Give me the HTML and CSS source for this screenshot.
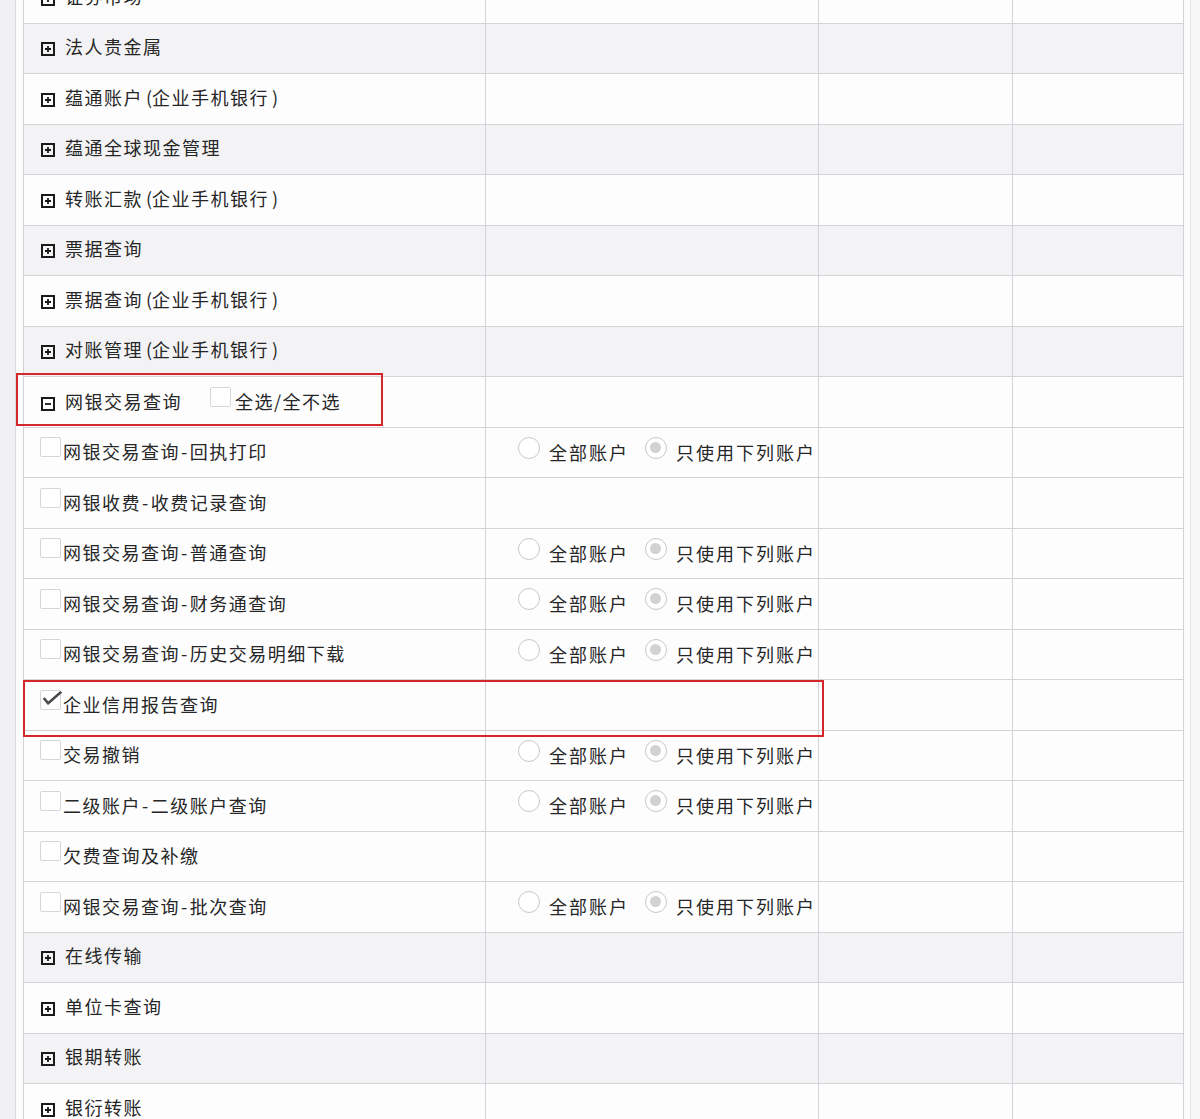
FILE: index.html
```html
<!DOCTYPE html>
<html lang="zh-CN">
<head>
    <meta charset="UTF-8">
    <title>权限设置</title>
    <link rel="stylesheet" href="styles.css">
</head>
<body>

<div class="page">
    <div class="rail"></div>
    <div class="main">
        <table class="perm">
            <colgroup>
                <col class="c-name"><col class="c-acct"><col class="c-x"><col class="c-y">
            </colgroup>
            <tr class="grp"><td><svg class="tog" viewBox="0 0 14 14"><rect x="1" y="1" width="12" height="12"/><path d="M4 7h6M7 4v6"/></svg>证券市场</td><td></td><td></td><td></td></tr>
            <tr class="grp alt"><td><svg class="tog" viewBox="0 0 14 14"><rect x="1" y="1" width="12" height="12"/><path d="M4 7h6M7 4v6"/></svg>法人贵金属</td><td></td><td></td><td></td></tr>
            <tr class="grp"><td><svg class="tog" viewBox="0 0 14 14"><rect x="1" y="1" width="12" height="12"/><path d="M4 7h6M7 4v6"/></svg>蕴通账户<span class="pa">(</span>企业手机银行<span class="pa">)</span></td><td></td><td></td><td></td></tr>
            <tr class="grp alt"><td><svg class="tog" viewBox="0 0 14 14"><rect x="1" y="1" width="12" height="12"/><path d="M4 7h6M7 4v6"/></svg>蕴通全球现金管理</td><td></td><td></td><td></td></tr>
            <tr class="grp"><td><svg class="tog" viewBox="0 0 14 14"><rect x="1" y="1" width="12" height="12"/><path d="M4 7h6M7 4v6"/></svg>转账汇款<span class="pa">(</span>企业手机银行<span class="pa">)</span></td><td></td><td></td><td></td></tr>
            <tr class="grp alt"><td><svg class="tog" viewBox="0 0 14 14"><rect x="1" y="1" width="12" height="12"/><path d="M4 7h6M7 4v6"/></svg>票据查询</td><td></td><td></td><td></td></tr>
            <tr class="grp"><td><svg class="tog" viewBox="0 0 14 14"><rect x="1" y="1" width="12" height="12"/><path d="M4 7h6M7 4v6"/></svg>票据查询<span class="pa">(</span>企业手机银行<span class="pa">)</span></td><td></td><td></td><td></td></tr>
            <tr class="grp alt"><td><svg class="tog" viewBox="0 0 14 14"><rect x="1" y="1" width="12" height="12"/><path d="M4 7h6M7 4v6"/></svg>对账管理<span class="pa">(</span>企业手机银行<span class="pa">)</span></td><td></td><td></td><td></td></tr>
            <tr class="grp"><td><svg class="tog" viewBox="0 0 14 14"><rect x="1" y="1" width="12" height="12"/><path d="M4 7h6"/></svg>网银交易查询<span class="all"><span class="cb"></span>全选/全不选</span></td><td></td><td></td><td></td></tr>

            <tr class="item"><td><span class="cb"></span>网银交易查询<span class="dash">-</span>回执打印</td><td><span class="rd"></span>全部账户<span class="rd on"></span>只使用下列账户</td><td></td><td></td></tr>
            <tr class="item"><td><span class="cb"></span>网银收费<span class="dash">-</span>收费记录查询</td><td></td><td></td><td></td></tr>
            <tr class="item"><td><span class="cb"></span>网银交易查询<span class="dash">-</span>普通查询</td><td><span class="rd"></span>全部账户<span class="rd on"></span>只使用下列账户</td><td></td><td></td></tr>
            <tr class="item"><td><span class="cb"></span>网银交易查询<span class="dash">-</span>财务通查询</td><td><span class="rd"></span>全部账户<span class="rd on"></span>只使用下列账户</td><td></td><td></td></tr>
            <tr class="item"><td><span class="cb"></span>网银交易查询<span class="dash">-</span>历史交易明细下载</td><td><span class="rd"></span>全部账户<span class="rd on"></span>只使用下列账户</td><td></td><td></td></tr>
            <tr class="item"><td><span class="cb checked"><svg viewBox="0 0 24 16"><path d="M2 8l5 6L22 1"/></svg></span>企业信用报告查询</td><td></td><td></td><td></td></tr>
            <tr class="item"><td><span class="cb"></span>交易撤销</td><td><span class="rd"></span>全部账户<span class="rd on"></span>只使用下列账户</td><td></td><td></td></tr>
            <tr class="item"><td><span class="cb"></span>二级账户<span class="dash">-</span>二级账户查询</td><td><span class="rd"></span>全部账户<span class="rd on"></span>只使用下列账户</td><td></td><td></td></tr>
            <tr class="item"><td><span class="cb"></span>欠费查询及补缴</td><td></td><td></td><td></td></tr>
            <tr class="item"><td><span class="cb"></span>网银交易查询<span class="dash">-</span>批次查询</td><td><span class="rd"></span>全部账户<span class="rd on"></span>只使用下列账户</td><td></td><td></td></tr>

            <tr class="grp alt"><td><svg class="tog" viewBox="0 0 14 14"><rect x="1" y="1" width="12" height="12"/><path d="M4 7h6M7 4v6"/></svg>在线传输</td><td></td><td></td><td></td></tr>
            <tr class="grp"><td><svg class="tog" viewBox="0 0 14 14"><rect x="1" y="1" width="12" height="12"/><path d="M4 7h6M7 4v6"/></svg>单位卡查询</td><td></td><td></td><td></td></tr>
            <tr class="grp alt"><td><svg class="tog" viewBox="0 0 14 14"><rect x="1" y="1" width="12" height="12"/><path d="M4 7h6M7 4v6"/></svg>银期转账</td><td></td><td></td><td></td></tr>
            <tr class="grp"><td><svg class="tog" viewBox="0 0 14 14"><rect x="1" y="1" width="12" height="12"/><path d="M4 7h6M7 4v6"/></svg>银衍转账</td><td></td><td></td><td></td></tr>
        </table>
    </div>
    <div class="rail-r"></div>

    <!-- highlight boxes drawn over the table -->
    <div class="mark mark-group"></div>
    <div class="mark mark-item"></div>
</div>

</body>
</html>
```

FILE: styles.css
```css
body { margin: 0; padding: 0; background: #fcfcfd; font-family: "Noto Sans CJK SC", "Noto Sans", sans-serif; color: #262626; }
.page { position: relative; display: flex; height: 1119px; overflow: hidden; }
.rail { width: 15px; flex: none; background: #f0f0f2; border-right: 1px solid #d9d9dc; }
.main { flex: none; padding: 0 6px 0 7px; }
.rail-r { flex: 1; border-left: 1px solid #e6e6e8; background: #f6f6f7; }

.perm { border-collapse: collapse; table-layout: fixed; width: 1161px; margin-top: -28px; font-size: 18px; letter-spacing: 1.5px; }
.perm col.c-name { width: 462px; }
.perm col.c-acct { width: 333px; }
.perm col.c-x { width: 194px; }
.perm col.c-y { width: 171px; }
.perm tr { height: 50.5px; }
.perm td { border: 1px solid #d3d3d7; padding: 0 0 4px; background: #fdfdfe; white-space: nowrap; vertical-align: middle; line-height: 24px; }
.perm tr.alt td { background: #f3f3f5; }

.perm .grp td:first-child { padding-left: 17px; }
.perm .item td:first-child { padding-left: 16px; }
.perm td:nth-child(2) { padding-left: 32px; letter-spacing: 2px; }

.pa { margin: 0 0 0 3px; letter-spacing: 0; }
.dash { margin: 0 1px; }

.tog { width: 14px; height: 14px; margin-right: 10px; vertical-align: -2px; fill: none; stroke: #1a1a1a; }
.tog rect { stroke-width: 2; }
.tog path { stroke-width: 1.8; }

.cb { display: inline-block; position: relative; width: 21px; height: 20px; border: 1px solid #d6d6d9; border-radius: 2px; background: #fff; vertical-align: 2px; margin-right: 2px; box-sizing: border-box; }
.cb.checked svg { position: absolute; left: 1px; top: 0; width: 21px; height: 14px; fill: none; stroke: #4a4a4a; stroke-width: 3; }
.all { margin-left: 28px; }
.all .cb { margin-right: 4px; }

.rd { display: inline-block; position: relative; width: 22px; height: 22px; border: 1.5px solid #c9c9cc; border-radius: 50%; background: #fff; box-sizing: border-box; vertical-align: 1px; margin-right: 9px; }
.rd.on { margin-left: 16px; }
.rd.on::after { content: ""; position: absolute; left: 4px; top: 4px; width: 11px; height: 11px; border-radius: 50%; background: #d2d2d5; }

.mark { position: absolute; border: 2.5px solid #d3272b; box-sizing: border-box; pointer-events: none; }
.mark-group { left: 16px; top: 373px; width: 367px; height: 53px; }
.mark-item { left: 23px; top: 680px; width: 801px; height: 57px; }
```
